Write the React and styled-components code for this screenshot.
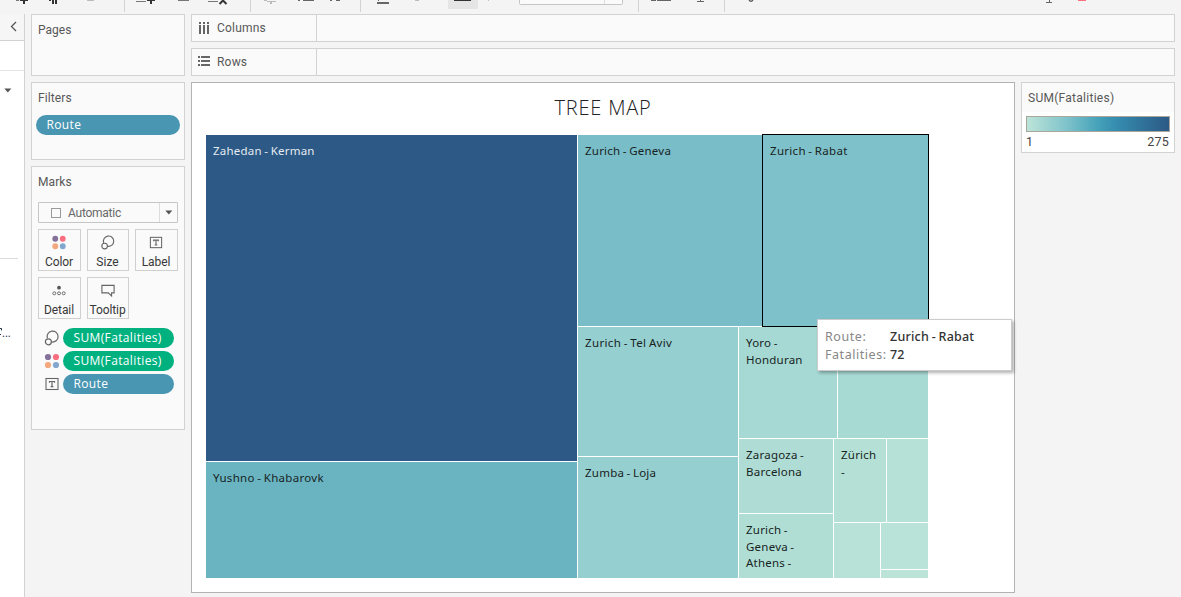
import React from "react";
import styled, { createGlobalStyle } from "styled-components";

const Global = createGlobalStyle`
  * { box-sizing: border-box; }
  html, body { margin: 0; padding: 0; }
  body {
    width: 1181px; height: 597px; overflow: hidden; background: #f4f4f4;
    font-family: "Open Sans", "Noto Sans", sans-serif; font-size: 12px; color: #4b4b4b;
  }
`;

const Page = styled.div`
  width: 1181px; height: 597px; overflow: hidden; display: flex; flex-direction: column; background: #f4f4f4;
`;
const Toolbar = styled.div`
  height: 14px; flex: none; overflow: hidden;
  svg { display: block; }
`;
const Body = styled.div`
  flex: 1; display: flex; min-height: 0;
`;
const DataPane = styled.aside`
  width: 25px; flex: none; background: #fff; border-right: 1px solid #d2d2d2; overflow: hidden;
  display: flex; flex-direction: column;
`;
const PaneHeader = styled.div`
  height: 27px; flex: none; background: #f6f6f6; border-bottom: 1px solid #d2d2d2; padding: 7px 0 0 10px;
  svg { display: block; }
`;
const PaneTabs = styled.div`
  height: 30px; flex: none; border-bottom: 1px solid #e3e3e3;
`;
const PaneTables = styled.div`
  height: 188px; width: 18px; flex: none; border-bottom: 1px solid #dcdcdc; padding: 17px 0 0 4px;
  svg { display: block; }
`;
const PaneField = styled.div`
  height: 16px; margin-top: 66px; flex: none; white-space: nowrap; color: #26374f; font-size: 11px; line-height: 16px;
  display: flex; align-items: flex-start;
  svg { margin-top: 3px; flex: none; }
`;
const Cards = styled.div`
  width: 154px; margin-left: 6px; flex: none; display: flex; flex-direction: column; gap: 6px;
`;
const Card = styled.section`
  height: ${(p) => p.$h}px; flex: none; background: #fafafa; border: 1px solid #d2d2d2; padding: 7px 4px 0 4px;
`;
const CardTitle = styled.h2`
  margin: 0 0 0 2px; font-weight: 400; font-size: 12px; line-height: 16px; color: #585858;
  font-family: Roboto, sans-serif; letter-spacing: ${(p) => p.$ls || 0}px;
`;
const Pill = styled.div`
  height: 20px; width: ${(p) => p.$w}px; border-radius: 10px; background: ${(p) => (p.$measure ? "#00b180" : "#4996b2")};
  color: #fff; font-size: 12px; line-height: 20px; padding-left: 10.5px; white-space: nowrap;
  letter-spacing: 0.36px;
`;
const FilterSlot = styled.div`
  margin-top: 9px;
`;
const MarkType = styled.div`
  margin: 12px 0 0 2px; width: 140px; height: 21px; border: 1px solid #c6c6c6; border-radius: 1px; display: flex; align-items: center;
  font-family: Roboto, sans-serif; font-weight: 400; color: #686868; letter-spacing: -0.25px; background: #fafafa; line-height: 19px;
`;
const MarkText = styled.span`
  padding-top: 1px;
`;
const MarkSquare = styled.span`
  width: 10px; height: 10px; margin: 0 7px 0 12px; border: 1px solid #999;
`;
const MarkArrow = styled.span`
  margin-left: auto; width: 18px; height: 19px; border-left: 1px solid #dcdcdc; display: flex; align-items: center; justify-content: center;
`;
const MarkGrid = styled.div`
  margin: 6px 0 0 2px; display: grid; grid-template-columns: 43px 42px 43px; grid-auto-rows: 42px; gap: 6px;
`;
const MarkButton = styled.button`
  margin: 0; padding: 5px 1px 0 0; border: 1px solid #d0d0d0; background: #fafafa; display: flex; flex-direction: column; align-items: center;
  font: 400 12px/16px Roboto, sans-serif; color: #383838; letter-spacing: ${(p) => p.$ls || 0}px; white-space: nowrap;
  span { margin-top: 4px; line-height: 16px; }
`;
const Encodings = styled.div`
  margin: 9px 0 0 8px; display: flex; flex-direction: column; gap: 3px;
`;
const Encoding = styled.div`
  display: flex; align-items: center; gap: 3px; height: 20px;
  svg { width: 16px; flex: none; margin-left: -0.5px; margin-right: 0.5px; }
`;
const Main = styled.main`
  margin-left: 6px; width: 984px; flex: none; display: flex; flex-direction: column; gap: 6px;
`;
const Shelf = styled.div`
  height: 28px; flex: none; border: 1px solid #d2d2d2; background: #fafafa; display: flex;
`;
const ShelfLabel = styled.div`
  width: 125px; border-right: 1px solid #d2d2d2; display: flex; align-items: center; gap: 7px; padding-left: 6px; color: #585858;
  font-family: Roboto, sans-serif; font-weight: 400; letter-spacing: 0.2px;
`;
const Work = styled.div`
  display: flex; gap: 6px; align-items: flex-start;
`;
const Sheet = styled.div`
  position: relative; height: 511px; width: 824px; flex: none; background: #fff; border: 1px solid #b3b3b3; padding: 10px 0 0 14px;
`;
const Title = styled.h1`
  margin: 0; padding-right: 14px; height: 42px; line-height: 30px; text-align: center; font-size: 20px; font-weight: 300; color: #222;
  letter-spacing: 0.8px;
`;
const Group = styled.div`
  display: flex; flex-direction: ${(p) => (p.$col ? "column" : "row")}; gap: 1px; flex: none;
  width: ${(p) => (p.$w ? p.$w + "px" : "auto")}; height: ${(p) => (p.$h ? p.$h + "px" : "auto")};
`;
const Cell = styled.div`
  flex: none; width: ${(p) => (p.$w ? p.$w + "px" : "auto")}; height: ${(p) => (p.$h ? p.$h + "px" : "auto")};
  background: ${(p) => p.$c}; color: ${(p) => (p.$light ? "#e4ebf2" : "#182423")};
  padding: 8px 0 0 7px; font-family: "Noto Sans", sans-serif; font-size: 11.5px; line-height: 16.5px; white-space: pre; overflow: hidden;
  letter-spacing: ${(p) => (p.$ls === undefined ? 0.23 : p.$ls)}px; word-spacing: -0.8px;
  ${(p) => p.$selected && "outline: 1px solid #000; z-index: 1; position: relative;"}
`;
const Tooltip = styled.div`
  position: absolute; left: 625px; top: 236px; width: 195px; height: 52px; background: #fff; border: 1px solid #ccc;
  box-shadow: 2px 2px 3px rgba(0, 0, 0, 0.3); z-index: 2; padding: 8px 7px; display: grid; grid-template-columns: 65px 1fr;
  grid-auto-rows: 18px; font-family: "Noto Sans", sans-serif; font-size: 12.5px; line-height: 18px; white-space: nowrap;
`;
const TipKey = styled.span`
  color: #878787; letter-spacing: 0.55px;
`;
const TipValue = styled.span`
  color: #333; font-weight: 500; letter-spacing: 0.22px; word-spacing: -0.8px;
`;
const Legend = styled.div`
  width: 154px; height: 71px; border: 1px solid #d2d2d2; background: linear-gradient(#fafafa 29px, #fff 29px); padding: 7px 4px 0 4px;
  flex: none;
`;
const Ramp = styled.div`
  height: 16px; margin-top: 10px; border: 1px solid #aaa69b;
  background: linear-gradient(90deg, #bce4d8, #81c4cb 27%, #45a2b9 50%, #358caf 63%, #2c5985);
`;
const Range = styled.div`
  display: flex; justify-content: space-between; font-family: Roboto, sans-serif; font-weight: 400; font-size: 12.5px; line-height: 19px; color: #444;
  padding-right: 1px; letter-spacing: 0.2px;
`;

const ColorIcon = () => (
  <svg width="16" height="16" viewBox="0 0 16 16">
    <circle cx="4" cy="4" r="3.1" fill="#84719a" />
    <circle cx="12" cy="4" r="3.1" fill="#fa6e80" />
    <circle cx="4" cy="12" r="3.1" fill="#f4a67c" />
    <circle cx="12" cy="12" r="3.1" fill="#82a6cd" />
  </svg>
);
const SizeIcon = () => (
  <svg width="16" height="16" viewBox="0 0 16 16" fill="none" stroke="#666" strokeWidth="1.2">
    <path d="M3.4 8.4A5.5 5.5 0 1 1 7.6 12" />
    <circle cx="4.4" cy="11.8" r="3" />
  </svg>
);
const LabelIcon = () => (
  <svg width="16" height="16" viewBox="0 0 16 16" fill="none" stroke="#666">
    <rect x="2" y="2.5" width="12" height="11" strokeWidth="1.1" />
    <path d="M5.5 6.7V5.5h5v1.2M8 5.5v5M6.6 10.7h2.8" strokeWidth="1.2" />
  </svg>
);
const DetailIcon = () => (
  <svg width="16" height="16" viewBox="0 0 16 16" fill="none" stroke="#666">
    <circle cx="8" cy="5" r="2" fill="#555" stroke="none" />
    <circle cx="3" cy="11" r="1.6" />
    <circle cx="8" cy="11" r="1.6" />
    <circle cx="13" cy="11" r="1.6" />
  </svg>
);
const TooltipIcon = () => (
  <svg width="16" height="16" viewBox="0 0 16 16" fill="none" stroke="#666" strokeWidth="1.2">
    <path d="M1.5 2.5h13v8h-2.7v3.3L8.3 10.5H1.5z" />
  </svg>
);
const DownArrow = () => (
  <svg width="8" height="5" viewBox="0 0 8 5"><path d="M.3 .5h7L3.8 4.5z" fill="#555" /></svg>
);
const ColumnsIcon = () => (
  <svg width="12" height="12" viewBox="0 0 12 12" fill="#666">
    {[1, 5, 9].map((x) => <path key={x} d={`M${x} 0h2v2h-2zM${x} 3h2v9h-2z`} />)}
  </svg>
);
const RowsIcon = () => (
  <svg width="12" height="12" viewBox="0 0 12 12" fill="#666">
    {[0, 4, 8].map((y) => <path key={y} d={`M0 ${y}h2v2H0zM3 ${y}h9v2H3z`} />)}
  </svg>
);

const ToolbarArt = () => (
  <svg width="1181" height="14" viewBox="0 0 1181 14">
    <path d="M124.5 0v12M250.5 0v12M360.5 0v12M638.5 0v12M724.5 0v12" stroke="#d2d2d2" />
    <path d="M16 0h3v1h-3zM136 1h10v1h-10zM208 1h10v1h-10z" fill="#777" />
    <path d="M20 0h8v1h-8zM23 1h2v3h-2zM147 0h8v1h-8zM150 1h2v3h-2zM52 0h2v4h-2zM55 0h2v4h-2zM49 0h2v1h-2z" fill="#333" />
    <path d="M219.5 4l3.5-3.5 3.5 3.5" stroke="#333" strokeWidth="2" fill="none" />
    <path d="M178 0h11v1h-11z" fill="#777" />
    <path d="M87 0h7v1h-7zM415 0h4v1h-4zM488 0h1v1h-1z" fill="#bbb" />
    <path d="M264 0h3v1h-3zM267 1h9v1h-9zM270 2h2v2h-2z" fill="#bbb" />
    <path d="M298 0h2v1h-2zM303 0h11v1h-11zM330 0h2v1h-2zM336 0h4v1h-4zM377 2h12v2h-12zM378 0h1v1h-1z" fill="#666" />
    <path d="M448 0h30v9h-30z" fill="#e5e5e5" />
    <path d="M454 0h17v1h-17z" fill="#333" />
    <path d="M519.5 0v3.5q0 1 1 1h101q1 0 1-1V0" stroke="#c6c6c6" fill="#fafafa" />
    <path d="M604.5 0v4" stroke="#ddd" />
    <path d="M651 0h5v1h-5zM657 0h14v1h-14zM700 0h1v1h-1zM697 1h7v1h-7zM1049 0h1v2h-1zM1046 2h6v1h-6z" fill="#666" />
    <path d="M749 0q2 2.5 4 0" stroke="#555" fill="none" strokeWidth="1.3" />
    <path d="M1078 0h8v1h-8z" fill="#fa6e80" />
  </svg>
);

export default function App() {
  return (
    <Page>
      <Global />
      <Toolbar><ToolbarArt /></Toolbar>
      <Body>
        <DataPane>
          <PaneHeader>
            <svg width="8" height="11" viewBox="0 0 8 11"><path d="M6 1L1.5 5.5 6 10" stroke="#555" strokeWidth="1.3" fill="none" /></svg>
          </PaneHeader>
          <PaneTabs />
          <PaneTables><DownArrow /></PaneTables>
          <PaneField>
            <svg width="2" height="10" viewBox="0 0 2 10"><path d="M0 .5h1.5v2M0 6.5h1" stroke="#26374f" fill="none" /></svg>
            ...
          </PaneField>
        </DataPane>
        <Cards>
          <Card $h={62}><CardTitle>Pages</CardTitle></Card>
          <Card $h={78}>
            <CardTitle $ls={0.1}>Filters</CardTitle>
            <FilterSlot><Pill $w={144}>Route</Pill></FilterSlot>
          </Card>
          <Card $h={264}>
            <CardTitle $ls={0.1}>Marks</CardTitle>
            <MarkType><MarkSquare /><MarkText>Automatic</MarkText><MarkArrow><DownArrow /></MarkArrow></MarkType>
            <MarkGrid>
              <MarkButton $ls={-0.1}><ColorIcon /><span>Color</span></MarkButton>
              <MarkButton><SizeIcon /><span>Size</span></MarkButton>
              <MarkButton $ls={-0.1}><LabelIcon /><span>Label</span></MarkButton>
              <MarkButton $ls={-0.1}><DetailIcon /><span>Detail</span></MarkButton>
              <MarkButton $ls={-0.1}><TooltipIcon /><span>Tooltip</span></MarkButton>
            </MarkGrid>
            <Encodings>
              <Encoding><SizeIcon /><Pill $measure $w={111}>SUM(Fatalities)</Pill></Encoding>
              <Encoding><ColorIcon /><Pill $measure $w={111}>SUM(Fatalities)</Pill></Encoding>
              <Encoding><LabelIcon /><Pill $w={111}>Route</Pill></Encoding>
            </Encodings>
          </Card>
        </Cards>
        <Main>
          <Shelf><ShelfLabel><ColumnsIcon />Columns</ShelfLabel></Shelf>
          <Shelf><ShelfLabel><RowsIcon />Rows</ShelfLabel></Shelf>
          <Work>
            <Sheet>
              <Title>TREE MAP</Title>
              <Group $w={722} $h={443}>
                <Group $col $w={371}>
                  <Cell $h={326} $c="#2c5985" $light>Zahedan - Kerman</Cell>
                  <Cell $h={116} $c="#6ab4c2" $ls={0.3}>Yushno - Khabarovk</Cell>
                </Group>
                <Group $col $w={350}>
                  <Group $h={191}>
                    <Cell $w={184} $c="#78bdc8">Zurich - Geneva</Cell>
                    <Cell $w={165} $c="#7fc1ca" $ls={0.3} $selected>Zurich - Rabat</Cell>
                  </Group>
                  <Group $h={251}>
                    <Group $col $w={160}>
                      <Cell $h={129} $c="#95cfcf" $ls={0.35}>Zurich - Tel Aviv</Cell>
                      <Cell $h={121} $c="#95cfcf">Zumba - Loja</Cell>
                    </Group>
                    <Group $col $w={189}>
                      <Group $h={111}>
                        <Cell $w={98} $c="#a6d9d3">{"Yoro -\nHonduran"}</Cell>
                        <Cell $w={90} $c="#a8dad4" />
                      </Group>
                      <Group $h={139}>
                        <Group $col $w={94}>
                          <Cell $h={74} $c="#afddd5">{"Zaragoza -\nBarcelona"}</Cell>
                          <Cell $h={64} $c="#b0ded5">{"Zurich -\nGeneva -\nAthens -"}</Cell>
                        </Group>
                        <Group $col $w={94}>
                          <Group $h={83}>
                            <Cell $w={52} $c="#b4e0d6">{"Zürich\n-"}</Cell>
                            <Cell $w={41} $c="#b6e1d7" />
                          </Group>
                          <Group $h={55}>
                            <Cell $w={46} $c="#b8e2d7" />
                            <Group $col $w={47}>
                              <Cell $h={46} $c="#b9e2d8" />
                              <Cell $h={8} $c="#bbe3d8" />
                            </Group>
                          </Group>
                        </Group>
                      </Group>
                    </Group>
                  </Group>
                </Group>
              </Group>
              <Tooltip>
                <TipKey>Route:</TipKey><TipValue>Zurich - Rabat</TipValue>
                <TipKey>Fatalities:</TipKey><TipValue>72</TipValue>
              </Tooltip>
            </Sheet>
            <Legend>
              <CardTitle $ls={0.27}>SUM(Fatalities)</CardTitle>
              <Ramp />
              <Range><span>1</span><span>275</span></Range>
            </Legend>
          </Work>
        </Main>
      </Body>
    </Page>
  );
}
